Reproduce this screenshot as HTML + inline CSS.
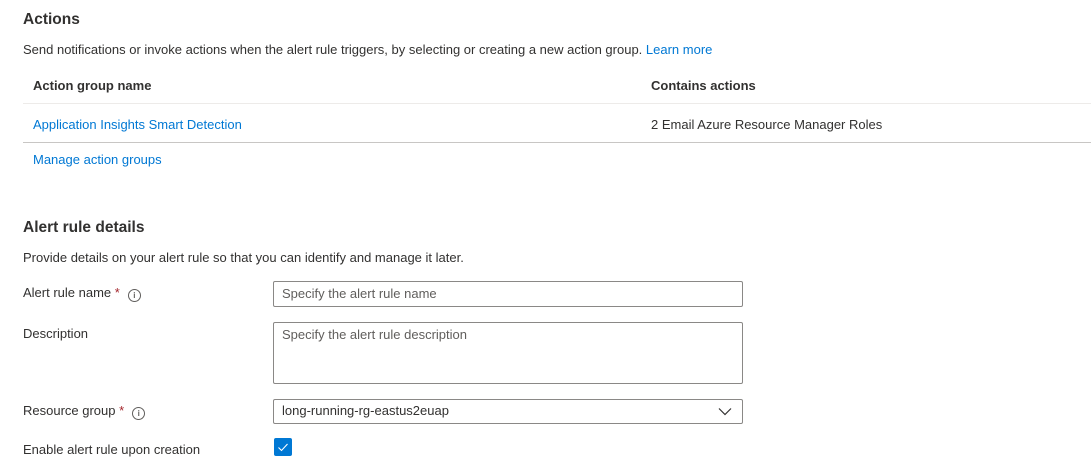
<!DOCTYPE html>
<html><head><meta charset="utf-8"><style>
body{margin:0;width:1091px;height:472px;overflow:hidden;background:#fff;font-family:"Liberation Sans",Arial,sans-serif;font-size:13px;color:#323130;position:relative}
.a{position:absolute;white-space:nowrap;line-height:16px}
h2{position:absolute;margin:0;font-size:15.5px;font-weight:bold;color:#323130;line-height:20px;white-space:nowrap}
.l{color:#0078d4}
.b{font-weight:bold}
.line{position:absolute;left:23px;right:0;height:1px}
.box{position:absolute;border:1px solid #8a8886;border-radius:2px;box-sizing:border-box}
.ph{color:#605e5c}
.req{color:#a4262c}
.i{display:inline-block;width:11px;height:11px;border:1px solid #605e5c;border-radius:50%;font-size:8px;line-height:11px;text-align:center;color:#605e5c;vertical-align:-1px;margin-left:8px;font-weight:bold}
</style></head><body>
<h2 style="left:23px;top:10px">Actions</h2>
<div class="a" style="left:23px;top:42px">Send notifications or invoke actions when the alert rule triggers, by selecting or creating a new action group. <span class="l">Learn more</span></div>
<div class="a b" style="left:33px;top:78px">Action group name</div>
<div class="a b" style="left:651px;top:78px">Contains actions</div>
<div class="line" style="top:103px;background:#edebe9"></div>
<div class="a l" style="left:33px;top:117px">Application Insights Smart Detection</div>
<div class="a" style="left:651px;top:117px">2 Email Azure Resource Manager Roles</div>
<div class="line" style="top:142px;background:#c8c6c4"></div>
<div class="a l" style="left:33px;top:152px">Manage action groups</div>
<h2 style="left:23px;top:218px">Alert rule details</h2>
<div class="a" style="left:23px;top:250px">Provide details on your alert rule so that you can identify and manage it later.</div>
<div class="a" style="left:23px;top:285px">Alert rule name <span class="req">*</span><span class="i">i</span></div>
<div class="box" style="left:273px;top:281px;width:470px;height:26px"><div class="a ph" style="left:8px;top:4px">Specify the alert rule name</div></div>
<div class="a" style="left:23px;top:326px">Description</div>
<div class="box" style="left:273px;top:322px;width:470px;height:62px"><div class="a ph" style="left:8px;top:4px">Specify the alert rule description</div></div>
<div class="a" style="left:23px;top:403px">Resource group <span class="req">*</span><span class="i">i</span></div>
<div class="box" style="left:273px;top:399px;width:470px;height:25px"><div class="a" style="left:8px;top:3px">long-running-rg-eastus2euap</div>
<svg style="position:absolute;right:10px;top:7px" width="14" height="9" viewBox="0 0 14 9"><path d="M1 1.5L7 7.5L13 1.5" fill="none" stroke="#323130" stroke-width="1.2"/></svg></div>
<div class="a" style="left:23px;top:442px">Enable alert rule upon creation</div>
<div style="position:absolute;left:274px;top:438px;width:18px;height:18px;background:#0078d4;border-radius:2px"><svg width="18" height="18" viewBox="0 0 18 18"><path d="M4.5 9.5L7.5 12.5L13.5 6" fill="none" stroke="#fff" stroke-width="1.1"/></svg></div>
</body></html>
